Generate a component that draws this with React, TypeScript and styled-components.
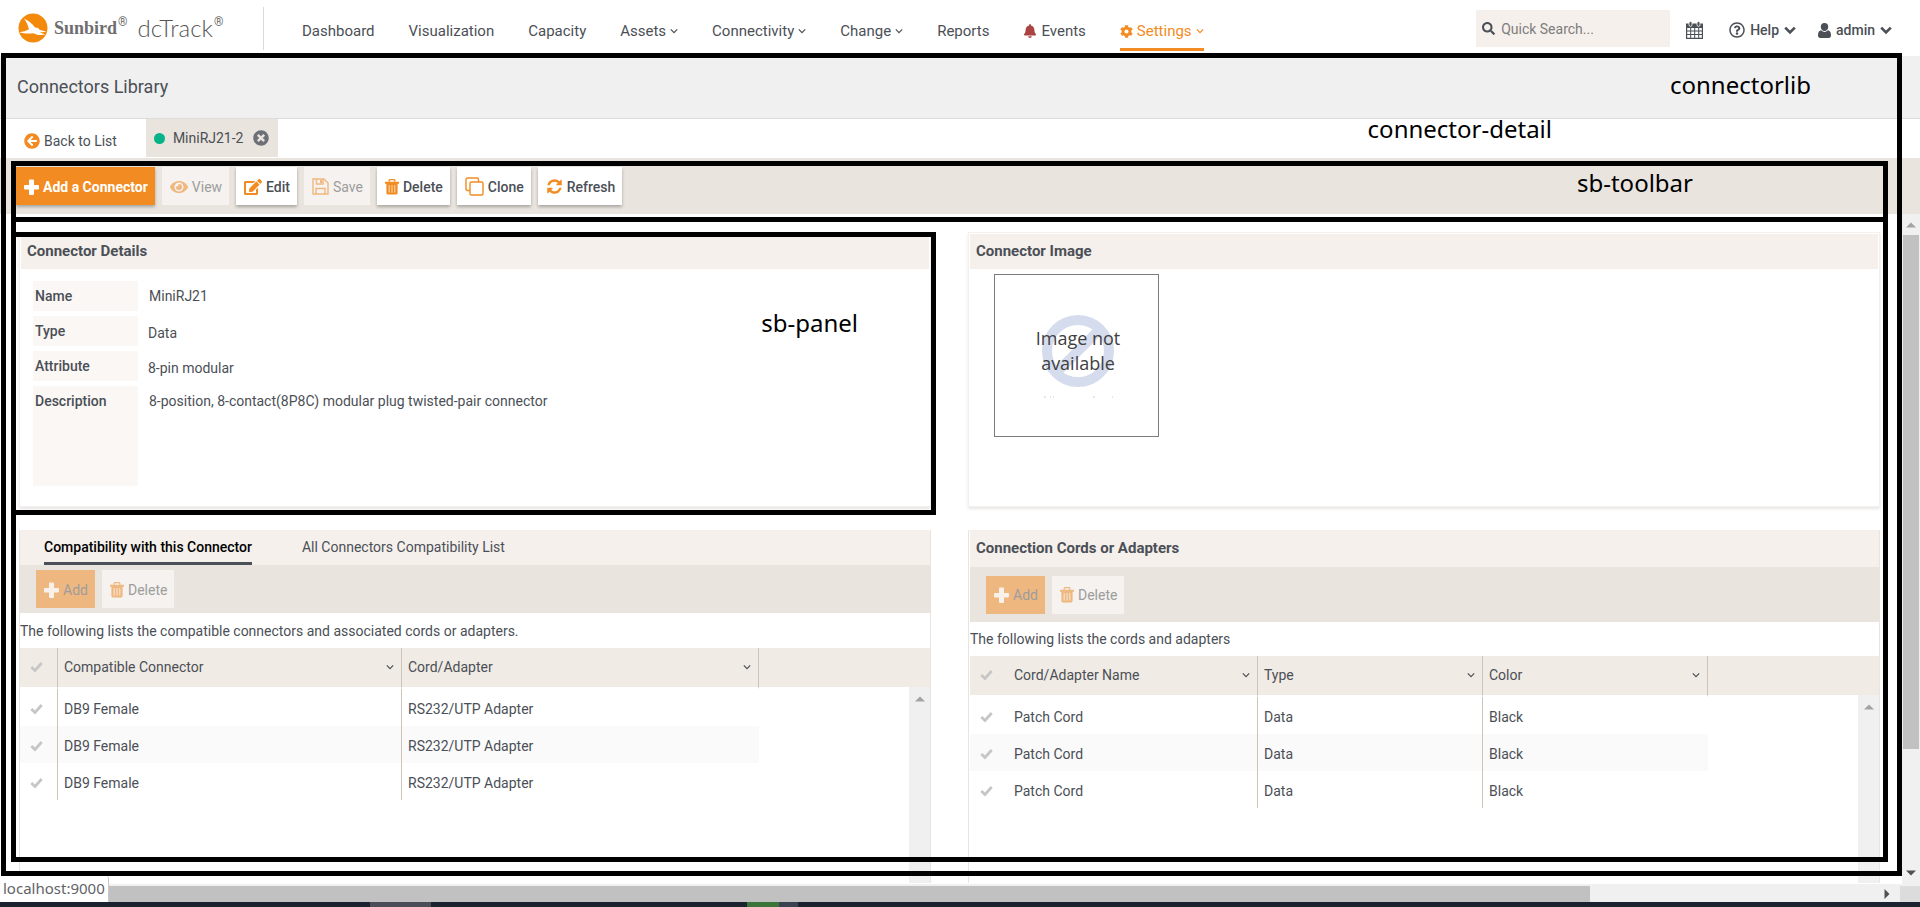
import React from "react";
import styled, { createGlobalStyle, css } from "styled-components";
import {
  FaBell,
  FaCog,
  FaEdit,
  FaEye,
  FaRegQuestionCircle,
  FaSearch,
  FaTimesCircle,
  FaArrowCircleLeft,
} from "react-icons/fa";

const color = {
  text: "#4b4f56",
  orange: "#f28c22",
  sand: "#e9e4dd",
  sandLight: "#f5f0ec",
  tableHead: "#f0ebe5",
  label: "#faf7f5",
  divider: "#cdc3b9",
  track: "#f0f0f0",
  thumb: "#c1c1c1",
};

const GlobalStyle = createGlobalStyle`
  *, *::before, *::after { box-sizing: border-box; }
  body {
    margin: 0;
    background: #fff;
    color: ${color.text};
    font-family: Roboto, "Liberation Sans", sans-serif;
    font-size: 14px;
    line-height: 20px;
  }
  button, input { font: inherit; color: inherit; }
  h1, h2, p, dl, dd, dt { margin: 0; font-size: inherit; font-weight: inherit; }
  a { color: inherit; text-decoration: none; }
  svg { display: block; flex: none; }
`;

/* ---------- shell ---------- */

const Shell = styled.div`
  display: flex;
  flex-direction: column;
  height: 100vh;
  overflow: hidden;
`;

const Header = styled.header`
  display: flex;
  align-items: center;
  flex: none;
  height: 56px;
  padding-right: 28px;
`;

const Brand = styled.a`
  display: flex;
  align-items: center;
  width: 264px;
  height: 43px;
  padding-left: 18px;
  border-right: 1px solid #d9d9d9;
  color: #6e6e6e;
`;

const BrandName = styled.span`
  margin-left: 6px;
  font: bold 18px/24px "Liberation Serif", serif;
`;

const BrandMark = styled.sup`
  align-self: flex-start;
  margin: 7px 0 0 1px;
  font-size: 12px;
  line-height: 16px;
`;

const ProductName = styled.span`
  margin-left: 10px;
  font: 300 24px/24px Lato, sans-serif;
  color: #555;
`;

const Nav = styled.nav`
  display: flex;
  flex: 1;
  gap: 34px;
  padding-left: 38px;
`;

const NavLink = styled.a<{ $active?: boolean }>`
  display: flex;
  align-items: center;
  gap: 4px;
  height: 42px;
  margin-top: 4px;
  padding-top: 5px;
  font-size: 15px;
  border-bottom: 3px solid transparent;
  ${(p) =>
    p.$active &&
    css`
      color: ${color.orange};
      border-color: ${color.orange};
    `}
`;

const SearchBox = styled.label`
  display: flex;
  align-items: center;
  gap: 6px;
  width: 194px;
  height: 37px;
  margin-top: 1px;
  padding: 0 6px;
  background: ${color.sandLight};
`;

const SearchInput = styled.input`
  flex: 1;
  min-width: 0;
  padding: 0;
  border: 0;
  background: none;
  outline: 0;
  &::placeholder {
    color: #7d7d7d;
    opacity: 1;
  }
`;

const PlainButton = styled.button`
  display: flex;
  align-items: center;
  gap: 5px;
  padding: 0;
  border: 0;
  background: none;
  font-weight: 500;
`;

const CalendarButton = styled(PlainButton)`
  margin-right: 4px;
`;

const UserTools = styled.div`
  display: flex;
  align-items: center;
  gap: 22px;
  margin-left: 16px;
  padding-top: 4px;
`;

const TopRight = styled.div`
  display: flex;
  align-items: center;
`;

const Main = styled.main`
  position: relative;
  display: flex;
  flex-direction: column;
  flex: 1;
  min-height: 0;
`;

const TitleBar = styled.h1`
  flex: none;
  height: 63px;
  padding: 21px 17px;
  border-bottom: 1px solid #dcdcdc;
  background: #f0f0f0;
  font-size: 18px;
`;

const DetailTabs = styled.div`
  display: flex;
  flex: none;
  gap: 29px;
  height: 39px;
  padding-left: 24px;
`;

const BackLink = styled.a`
  display: flex;
  align-items: center;
  gap: 4px;
  padding-top: 5px;
`;

const OpenTab = styled.div`
  display: flex;
  align-items: center;
  gap: 8px;
  height: 38px;
  padding: 0 9px 0 8px;
  background: ${color.sand};
`;

const StatusDot = styled.span`
  width: 11px;
  height: 11px;
  border-radius: 50%;
  background: #06b388;
`;

const CloseButton = styled(PlainButton)`
  margin-left: 2px;
  color: #6d7076;
`;

const Toolbar = styled.div`
  display: flex;
  flex: none;
  gap: 7px;
  height: 56px;
  padding: 9px 16px;
  background: ${color.sand};
`;

const ToolButton = styled.button<{ $primary?: boolean }>`
  display: flex;
  align-items: center;
  gap: 4px;
  height: 38px;
  padding: 1px 7px 0 8px;
  border: 0;
  background: #fff;
  font-weight: 500;
  white-space: nowrap;
  box-shadow: 0 2px 3px rgba(0, 0, 0, 0.28);
  svg {
    color: ${color.orange};
  }
  &:disabled {
    color: #9d9d9d;
    background: #f5f2ef;
    box-shadow: none;
    font-weight: 400;
  }
  &:disabled svg {
    color: #efb880;
  }
  ${(p) =>
    p.$primary &&
    css`
      color: #fff;
      background: ${color.orange};
      font-weight: 700;
      svg {
        color: #fff;
      }
      &:disabled {
        background: #efb780;
      }
      &:disabled svg {
        color: #f8f1ea;
      }
    `}
`;

const Body = styled.div`
  display: flex;
  flex: 1;
  min-height: 0;
`;

const PanelGrid = styled.div`
  display: grid;
  flex: 1;
  grid-template-columns: minmax(0, 1fr) minmax(0, 1fr);
  grid-template-rows: 275px minmax(0, 1fr);
  gap: 23px 37px;
  min-width: 0;
  padding: 18px 22px 1px 19px;
`;

/* ---------- panels ---------- */

const Panel = styled.section`
  position: relative;
  display: flex;
  flex-direction: column;
  min-width: 0;
  min-height: 0;
  padding: 1px;
  border: 1px solid ${color.sandLight};
  box-shadow: 0 2px 3px rgba(0, 0, 0, 0.1);
`;

const ListPanel = styled(Panel)<{ $inset?: boolean }>`
  padding: 0 0 0 ${(p) => (p.$inset ? 1 : 0)}px;
  border-color: ${color.sand};
  border-top-color: ${color.sandLight};
  border-bottom: 0;
  box-shadow: none;
`;

const PanelTitle = styled.h2<{ $tall?: boolean }>`
  flex: none;
  height: ${(p) => (p.$tall ? 36 : 35)}px;
  padding: 7px 6px;
  background: ${color.sandLight};
  font-size: 15px;
  font-weight: 700;
`;

const Fields = styled.dl`
  display: grid;
  grid-template-columns: 105px 1fr;
  grid-template-rows: 30px 30px 30px 100px;
  gap: 5px 10px;
  padding: 12px;
`;

const FieldLabel = styled.dt`
  padding: 5px 2px;
  background: ${color.label};
  font-weight: 500;
`;

const FieldValue = styled.dd<{ $picked?: boolean }>`
  padding: ${(p) => (p.$picked ? "7px 0 0" : "5px 1px 0")};
`;

const ImageFrame = styled.figure`
  display: grid;
  place-items: center;
  width: 165px;
  height: 163px;
  margin: 5px 24px;
  border: 1px solid #7c7c7c;
`;

const ListTabs = styled.div`
  display: flex;
  flex: none;
  gap: 50px;
  height: 34px;
  padding: 0 24px;
  background: ${color.sandLight};
`;

const ListTab = styled.button<{ $active?: boolean }>`
  padding: 0;
  border: 0;
  border-bottom: 3px solid ${(p) => (p.$active ? color.text : "transparent")};
  background: none;
  font-weight: ${(p) => (p.$active ? 500 : 400)};
  color: ${(p) => (p.$active ? "#000" : color.text)};
`;

const ListToolbar = styled.div<{ $tall?: boolean }>`
  display: flex;
  flex: none;
  align-items: center;
  gap: 7px;
  height: ${(p) => (p.$tall ? 55 : 48)}px;
  padding: 0 16px;
  background: ${color.sand};
`;

const ListHint = styled.p<{ $tall?: boolean }>`
  flex: none;
  height: ${(p) => (p.$tall ? 34 : 35)}px;
  padding-top: ${(p) => (p.$tall ? 7 : 8)}px;
`;

const TableArea = styled.div`
  position: relative;
  flex: 1;
  min-height: 0;
`;

const Table = styled.table`
  width: 100%;
  table-layout: fixed;
  border-collapse: separate;
  border-spacing: 0;
  text-align: left;
`;

const HeadCell = styled.th<{ $line?: boolean }>`
  height: 41px;
  padding: 0 7px 2px 6px;
  border-right: ${(p) => (p.$line ? `1px solid ${color.divider}` : 0)};
  border-bottom: 2px solid #fff;
  background: ${color.tableHead};
  font-weight: 400;
`;

const HeadContent = styled.div`
  display: flex;
  align-items: center;
  justify-content: space-between;
`;

const Cell = styled.td<{ $line?: boolean }>`
  height: 37px;
  padding: 2px 6px 0;
  border-right: 1px solid ${(p) => (p.$line ? color.divider : "transparent")};
`;

const Row = styled.tr`
  &:nth-child(even) ${Cell}:not(:last-child) {
    background: #fafafa;
  }
`;

const TickLabel = styled.label`
  position: relative;
  display: flex;
  padding-left: 4px;
  color: #c6c6c6;
  input {
    position: absolute;
    inset: 0;
    margin: 0;
    opacity: 0;
  }
`;

/* ---------- scroll bars and window edge ---------- */

const ListTrack = styled.div`
  position: absolute;
  top: 39px;
  right: 0;
  bottom: 0;
  display: flex;
  justify-content: center;
  width: 21px;
  padding-top: 7px;
  background: ${color.track};
`;

const PageTrack = styled.div`
  display: flex;
  flex-direction: column;
  align-items: center;
  width: 18px;
  padding: 6px 0;
  background: ${color.track};
`;

const PageThumb = styled.div`
  flex: 514;
  width: 16px;
  margin-top: 5px;
  background: ${color.thumb};
`;

const PageRest = styled.div`
  flex: 119;
`;

const BottomTrack = styled.div`
  display: flex;
  align-items: stretch;
  flex: none;
  height: 18px;
  padding-top: 2px;
  background: ${color.track};
`;

const BottomThumb = styled.div`
  flex: 1597;
  background: ${color.thumb};
`;

const BottomRest = styled.div`
  display: flex;
  align-items: center;
  justify-content: flex-end;
  flex: 303;
  padding-right: 8px;
`;

const TrackCorner = styled.div`
  width: 20px;
  background: #dcdcdc;
`;

const Taskbar = styled.div`
  display: flex;
  flex: none;
  height: 5px;
  background: #1b2230;
`;

const TaskItem = styled.div<{ $start?: number; $width: number; $fill: string }>`
  width: ${(p) => p.$width}px;
  margin-left: ${(p) => p.$start || 0}px;
  background: ${(p) => p.$fill};
`;

const StatusBubble = styled.div`
  position: absolute;
  left: 0;
  bottom: -18px;
  z-index: 3;
  height: 26px;
  padding: 0 3px;
  border-right: 1px solid #c8c8c8;
  border-top-right-radius: 3px;
  background: #fff;
  color: #5f6368;
  font: 15px/24px "Noto Sans", sans-serif;
`;

/* ---------- annotation frames ---------- */

const Frame = styled.div`
  position: absolute;
  z-index: 2;
  border: 5px solid #000;
  pointer-events: none;
`;

const LibraryFrame = styled(Frame)`
  inset: -3px 18px 8px 1px;
`;

const DetailFrame = styled(Frame)`
  inset: 105px 32px 22px 11px;
`;

const ToolbarFrame = styled(Frame)`
  top: 105px;
  right: 32px;
  left: 11px;
  height: 61px;
`;

const PanelFrame = styled(Frame)`
  inset: -1px -6px -9px -9px;
`;

const FrameName = styled.span<{ $top: number; $right: number }>`
  position: absolute;
  top: ${(p) => p.$top}px;
  right: ${(p) => p.$right}px;
  color: #000;
  font: 24px/32px "Noto Sans", sans-serif;
  white-space: nowrap;
`;

/* ---------- drawings ---------- */

const SunbirdLogo = () => (
  <svg width="30" height="30" viewBox="0 0 30 30" aria-hidden="true">
    <circle cx="15" cy="15" r="14.5" fill="#f48a0b" />
    <path
      d="M6 5.500C10 7.500 14.500 10.500 17 14.500C19 14.300 20.800 15 21.500 16.700L28.500 18.800L21.500 19.600L27.500 21.600C23 22.600 19 22 15.500 20.200C11.500 20.800 5.500 20.600 1 19.200C5 18.900 8.500 17.900 11 16.300C10 12.500 8.500 8.500 6 5.500Z"
      fill="#fff"
    />
  </svg>
);

const Chevron = ({ size = 8, weight = 1.5 }: { size?: number; weight?: number }) => (
  <svg width={size} height={size} viewBox="0 0 10 10" aria-hidden="true">
    <path d="M1 3L5 7L9 3" fill="none" stroke="currentColor" strokeWidth={weight} />
  </svg>
);

const CheckIcon = () => (
  <svg width="13" height="12" viewBox="0 0 13 12" aria-hidden="true">
    <path d="M1.300 6L5 9.500L11.700 2" fill="none" stroke="currentColor" strokeWidth="2.800" />
  </svg>
);

const PlusIcon = () => (
  <svg width="15" height="16" viewBox="0 0 15 16" aria-hidden="true">
    <path
      d="M6 .5h3q1 0 1 1V6h4q1 0 1 1v2.500q0 1-1 1h-4V15q0 1-1 1H6q-1 0-1-1v-4.500H1q-1 0-1-1V7q0-1 1-1h4V1.500q0-1 1-1z"
      fill="currentColor"
    />
  </svg>
);

const SaveIcon = () => (
  <svg width="17" height="17" viewBox="0 0 17 17" aria-hidden="true">
    <g fill="none" stroke="currentColor" strokeWidth="1.400">
      <path d="M1 1h11l4 4v11H1z" />
      <path d="M4.500 1v5h6.500V1M4 16v-5.500h9V16" />
    </g>
    <path d="M8 2h2v3H8z" fill="currentColor" />
  </svg>
);

const CloneIcon = () => (
  <svg width="19" height="19" viewBox="0 0 19 19" aria-hidden="true">
    <g fill="none" stroke="currentColor" strokeWidth="1.400">
      <rect x="5" y="5" width="13" height="13" rx="1.500" />
      <path d="M5 13.500H2.500Q1 13.500 1 12V2.500Q1 1 2.500 1H12q1.500 0 1.500 1.500V5" />
    </g>
  </svg>
);

const RefreshIcon = () => (
  <svg width="17" height="17" viewBox="0 0 1792 1792" aria-hidden="true">
    <path
      fill="currentColor"
      d="M1639 1056q0 5-1 7-64 268-268 434.500t-478 166.500q-146 0-282.500-55t-243.500-157l-129 129q-19 19-45 19t-45-19-19-45v-448q0-26 19-45t45-19h448q26 0 45 19t19 45-19 45l-137 137q71 66 161 102t187 36q134 0 250-65t186-179q11-17 53-117 8-23 30-23h192q13 0 22.500 9.500t9.500 22.500zm25-800v448q0 26-19 45t-45 19h-448q-26 0-45-19t-19-45 19-45l138-138q-148-137-349-137-134 0-250 65t-186 179q-11 17-53 117-8 23-30 23h-199q-13 0-22.500-9.500t-9.500-22.500v-7q65-268 270-434.500t480-166.500q146 0 284 55.500t245 156.500l130-129q19-19 45-19t45 19 19 45z"
    />
  </svg>
);

const TrashIcon = () => (
  <svg width="14" height="16" viewBox="0 0 15 17" aria-hidden="true">
    <path d="M4.500 3V1.500q0-.8.8-.8h4.400q.8 0 .8.8V3" fill="none" stroke="currentColor" strokeWidth="1.400" />
    <path d="M0 3h15v2H0zM1.500 5h12v10q0 1.500-1.500 1.500H3q-1.500 0-1.500-1.500z" fill="currentColor" />
    <path d="M4.500 6.500v8M7.500 6.500v8M10.500 6.500v8" stroke="#fff" strokeOpacity=".75" />
  </svg>
);

const CalendarIcon = () => (
  <svg width="17" height="18" viewBox="0 0 17 18" aria-hidden="true">
    <path d="M0 2.500h17V18H0z" fill="currentColor" />
    <path
      d="M1.200 7h3v2.500h-3zM5.200 7h3v2.500h-3zM9.200 7h3v2.500h-3zM13.200 7h2.600v2.500h-2.600zM1.200 10.500h3V13h-3zM5.200 10.500h3V13h-3zM9.200 10.500h3V13h-3zM13.200 10.500h2.600V13h-2.600zM1.200 14h3v2.800h-3zM5.200 14h3v2.800h-3zM9.200 14h3v2.800h-3zM13.200 14h2.600v2.800h-2.600z"
      fill="#fff"
    />
    <g fill="currentColor" stroke="#fff" strokeWidth=".8">
      <rect x="3" y=".4" width="3" height="5" rx="1.500" />
      <rect x="11" y=".4" width="3" height="5" rx="1.500" />
    </g>
  </svg>
);

const UserIcon = () => (
  <svg width="13" height="15" viewBox="0 0 14 16" aria-hidden="true">
    <path
      d="M7 0a4 4.200 0 0 1 4 4.200C11 6.500 9.300 8.600 7 8.600S3 6.500 3 4.200A4 4.200 0 0 1 7 0zM3.500 7.800C4.500 8.900 5.700 9.500 7 9.500s2.500-.6 3.500-1.700c2.400.2 3.500 2.200 3.500 5.700 0 1.500-1 2.500-2.500 2.500h-9C1 16 0 15 0 13.500 0 10 1.100 8 3.500 7.800z"
      fill="currentColor"
    />
  </svg>
);

const Arrow = ({ turn = 0, fill = "#505050" }: { turn?: number; fill?: string }) => (
  <svg width="10" height="10" viewBox="0 0 10 10" aria-hidden="true">
    <path d="M0 7.500L5 2.500L10 7.500Z" fill={fill} transform={`rotate(${turn} 5 5)`} />
  </svg>
);

const MissingImage = () => (
  <svg width="100" height="100" viewBox="0 0 100 100" role="img" aria-label="Image not available">
    <g fill="none" stroke="#d5dcee" strokeWidth="10">
      <circle cx="51" cy="45" r="31" />
      <path d="M30 66L72 24" />
    </g>
    <g fill="#404040" fontFamily="Open Sans, sans-serif" fontSize="18" textAnchor="middle">
      <text x="51" y="39">Image not</text>
      <text x="51" y="64">available</text>
    </g>
    <path d="M17 91h2M23 91h1M26 91h1M66 91h2M85 91h1" stroke="#ccc" strokeWidth="1" />
  </svg>
);

/* ---------- lists ---------- */

type Column = { name: string; width: number };

type ListProps = {
  columns: Column[];
  rows: string[][];
  tickLine?: boolean;
};

const Tick = ({ name }: { name: string }) => (
  <TickLabel>
    <input type="checkbox" aria-label={name} />
    <CheckIcon />
  </TickLabel>
);

const DataList = ({ columns, rows, tickLine }: ListProps) => (
  <TableArea>
    <Table>
      <colgroup>
        <col width={38} />
        {columns.map((c) => (
          <col key={c.name} width={c.width} />
        ))}
        <col />
      </colgroup>
      <thead>
        <tr>
          <HeadCell $line={tickLine}>
            <Tick name="Select all" />
          </HeadCell>
          {columns.map((c) => (
            <HeadCell key={c.name} $line>
              <HeadContent>
                {c.name}
                <Chevron />
              </HeadContent>
            </HeadCell>
          ))}
          <HeadCell />
        </tr>
      </thead>
      <tbody>
        {rows.map((row, r) => (
          <Row key={r}>
            <Cell $line={tickLine}>
              <Tick name={`Select row ${r + 1}`} />
            </Cell>
            {row.map((value, i) => (
              <Cell key={i} $line={i < row.length - 1}>
                {value}
              </Cell>
            ))}
            <Cell />
          </Row>
        ))}
      </tbody>
    </Table>
    <ListTrack>
      <Arrow fill="#a3a3a3" />
    </ListTrack>
  </TableArea>
);

const ListActions = ({ tall }: { tall?: boolean }) => (
  <ListToolbar $tall={tall}>
    <ToolButton $primary disabled>
      <PlusIcon />
      Add
    </ToolButton>
    <ToolButton disabled>
      <TrashIcon />
      Delete
    </ToolButton>
  </ListToolbar>
);

const compatible = Array.from({ length: 3 }, () => ["DB9 Female", "RS232/UTP Adapter"]);
const cords = Array.from({ length: 3 }, () => ["Patch Cord", "Data", "Black"]);

export default function App() {
  return (
    <Shell>
      <GlobalStyle />
      <Header>
        <Brand href="#">
          <SunbirdLogo />
          <BrandName>Sunbird</BrandName>
          <BrandMark>®</BrandMark>
          <ProductName>dcTrack</ProductName>
          <BrandMark>®</BrandMark>
        </Brand>
        <Nav>
          <NavLink href="#">Dashboard</NavLink>
          <NavLink href="#">Visualization</NavLink>
          <NavLink href="#">Capacity</NavLink>
          <NavLink href="#">
            Assets <Chevron />
          </NavLink>
          <NavLink href="#">
            Connectivity <Chevron />
          </NavLink>
          <NavLink href="#">
            Change <Chevron />
          </NavLink>
          <NavLink href="#">Reports</NavLink>
          <NavLink href="#">
            <FaBell size={14} color="#a94442" /> Events
          </NavLink>
          <NavLink href="#" $active>
            <FaCog size={13} /> Settings <Chevron />
          </NavLink>
        </Nav>
        <TopRight>
          <SearchBox>
            <FaSearch size={13} />
            <SearchInput type="text" placeholder="Quick Search..." aria-label="Quick Search" />
          </SearchBox>
          <UserTools>
            <CalendarButton aria-label="Calendar">
              <CalendarIcon />
            </CalendarButton>
            <PlainButton>
              <FaRegQuestionCircle size={16} /> Help <Chevron size={12} weight={2.2} />
            </PlainButton>
            <PlainButton>
              <UserIcon /> admin <Chevron size={12} weight={2.2} />
            </PlainButton>
          </UserTools>
        </TopRight>
      </Header>

      <Main>
        <TitleBar>Connectors Library</TitleBar>
        <DetailTabs>
          <BackLink href="#">
            <FaArrowCircleLeft size={16} color={color.orange} />
            Back to List
          </BackLink>
          <OpenTab>
            <StatusDot />
            MiniRJ21-2
            <CloseButton aria-label="Close MiniRJ21-2">
              <FaTimesCircle size={16} />
            </CloseButton>
          </OpenTab>
        </DetailTabs>
        <Toolbar>
          <ToolButton $primary>
            <PlusIcon />
            Add a Connector
          </ToolButton>
          <ToolButton disabled>
            <FaEye size={18} />
            View
          </ToolButton>
          <ToolButton>
            <FaEdit size={18} />
            Edit
          </ToolButton>
          <ToolButton disabled>
            <SaveIcon />
            Save
          </ToolButton>
          <ToolButton>
            <TrashIcon />
            Delete
          </ToolButton>
          <ToolButton>
            <CloneIcon />
            Clone
          </ToolButton>
          <ToolButton>
            <RefreshIcon />
            Refresh
          </ToolButton>
        </Toolbar>

        <Body>
          <PanelGrid>
            <Panel>
              <PanelTitle>Connector Details</PanelTitle>
              <Fields>
                <FieldLabel>Name</FieldLabel>
                <FieldValue>MiniRJ21</FieldValue>
                <FieldLabel>Type</FieldLabel>
                <FieldValue $picked>Data</FieldValue>
                <FieldLabel>Attribute</FieldLabel>
                <FieldValue $picked>8-pin modular</FieldValue>
                <FieldLabel>Description</FieldLabel>
                <FieldValue>8-position, 8-contact(8P8C) modular plug twisted-pair connector</FieldValue>
              </Fields>
              <PanelFrame>
                <FrameName $top={70} $right={73}>
                  sb-panel
                </FrameName>
              </PanelFrame>
            </Panel>

            <Panel>
              <PanelTitle>Connector Image</PanelTitle>
              <ImageFrame>
                <MissingImage />
              </ImageFrame>
            </Panel>

            <ListPanel>
              <ListTabs>
                <ListTab $active>Compatibility with this Connector</ListTab>
                <ListTab>All Connectors Compatibility List</ListTab>
              </ListTabs>
              <ListActions />
              <ListHint>The following lists the compatible connectors and associated cords or adapters.</ListHint>
              <DataList
                tickLine
                columns={[
                  { name: "Compatible Connector", width: 344 },
                  { name: "Cord/Adapter", width: 357 },
                ]}
                rows={compatible}
              />
            </ListPanel>

            <ListPanel $inset>
              <PanelTitle $tall>Connection Cords or Adapters</PanelTitle>
              <ListActions tall />
              <ListHint $tall>The following lists the cords and adapters</ListHint>
              <DataList
                columns={[
                  { name: "Cord/Adapter Name", width: 250 },
                  { name: "Type", width: 225 },
                  { name: "Color", width: 225 },
                ]}
                rows={cords}
              />
            </ListPanel>
          </PanelGrid>
          <PageTrack>
            <Arrow fill="#a3a3a3" />
            <PageThumb />
            <PageRest />
            <Arrow turn={180} />
          </PageTrack>
        </Body>

        <LibraryFrame>
          <FrameName $top={11} $right={86}>
            connectorlib
          </FrameName>
        </LibraryFrame>
        <DetailFrame>
          <FrameName $top={-53} $right={331}>
            connector-detail
          </FrameName>
        </DetailFrame>
        <ToolbarFrame>
          <FrameName $top={1} $right={190}>
            sb-toolbar
          </FrameName>
        </ToolbarFrame>
        <StatusBubble>localhost:9000</StatusBubble>
      </Main>

      <BottomTrack>
        <BottomThumb />
        <BottomRest>
          <Arrow turn={90} />
        </BottomRest>
        <TrackCorner />
      </BottomTrack>
      <Taskbar>
        <TaskItem $start={370} $width={61} $fill="#4a4e58" />
        <TaskItem $start={316} $width={32} $fill="#3b7439" />
        <TaskItem $width={19} $fill="#3a4150" />
      </Taskbar>
    </Shell>
  );
}
